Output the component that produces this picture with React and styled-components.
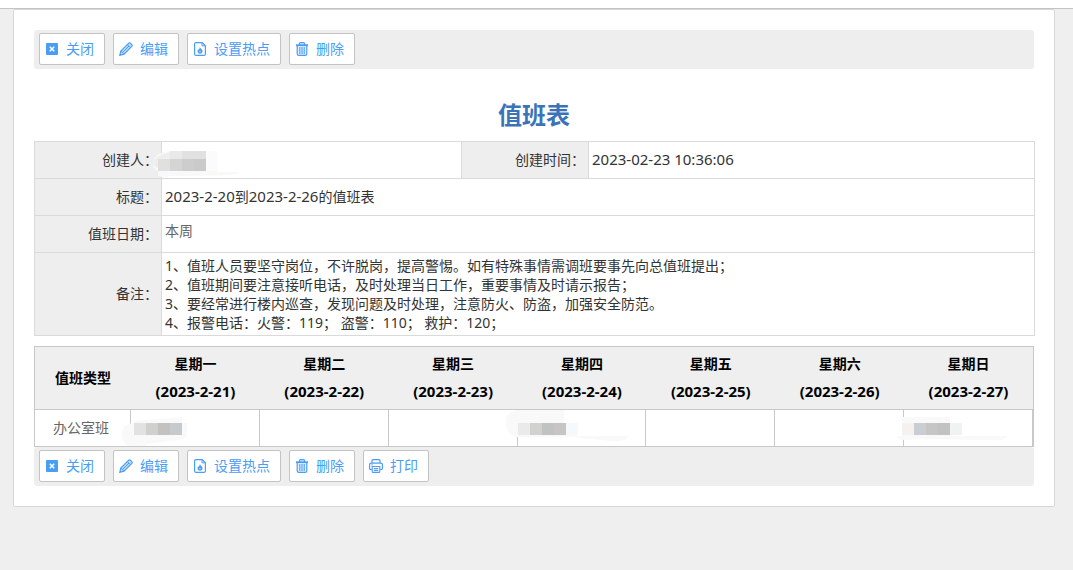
import React from "react";
import styled, { createGlobalStyle } from "styled-components";

const GlobalStyle = createGlobalStyle`
  * { box-sizing: border-box; }
  body {
    margin: 0;
    background: #efefef;
    color: #333;
    font-family: "Noto Sans", "Noto Sans CJK SC", sans-serif;
    font-size: 14px;
    line-height: 19px;
  }
`;

const TopStrip = styled.header`
  height: 9px;
  background: #fff;
  border-bottom: 1px solid #c3c3c3;
`;

const Card = styled.main`
  margin: 0 18px 0 13px;
  padding: 20px;
  background: #fff;
  border: 1px solid #d7d7d7;
  border-radius: 2px;
`;

const Toolbar = styled.div`
  display: flex;
  gap: 8px;
  padding: 3px 5px 4px;
  background: #eee;
  border-radius: 3px;
`;

const ToolButton = styled.button`
  display: flex;
  align-items: center;
  gap: 7px;
  height: 32px;
  padding: 0 10px 0 5px;
  background: #fff;
  border: 1px solid #c3c3c3;
  border-radius: 2px;
  color: #4a9df5;
  font-family: "Noto Sans CJK SC", sans-serif;
  font-size: 14px;
  line-height: 20px;
  white-space: nowrap;
  cursor: pointer;
`;

const ButtonLabel = styled.span`
  padding-bottom: 2px;
`;

const Icon = styled.svg`
  width: 14px;
  height: 14px;
  flex: none;
  fill: none;
  stroke: currentColor;
`;

const Title = styled.h1`
  margin: 28px 0 8px;
  color: #3b73b9;
  font-size: 24px;
  line-height: 36px;
  font-weight: 700;
  text-align: center;
`;

const InfoTable = styled.table`
  width: calc(100% + 1px);
  table-layout: fixed;
  border-collapse: collapse;
`;

const InfoLabel = styled.th`
  height: 37px;
  padding: 0 3px 2px 0;
  background: #eee;
  border: 1px solid #dadada;
  font-weight: 400;
  text-align: right;
`;

const InfoValue = styled.td`
  position: relative;
  padding: ${(p) => (p.$top ? "5px 3px" : "0 3px 2px")};
  border: 1px solid #dadada;
  color: ${(p) => (p.$muted ? "#666" : "#333")};
  vertical-align: ${(p) => (p.$top ? "top" : "middle")};
`;

const DateText = styled.span`
  font-size: 15px;
`;

const NoteList = styled.div`
  padding: 3px 0 1px;
  white-space: pre-line;
`;

const ScheduleTable = styled.table`
  width: 100%;
  margin-top: 10px;
  table-layout: fixed;
  border-collapse: separate;
  border-spacing: 0;
  border: 1px solid #c8c8c8;
`;

const DayHead = styled.th`
  height: 62px;
  padding: ${(p) => (p.$days ? "0 0 2px" : "0")};
  background: #efefef;
  color: #000;
  line-height: 28px;
  font-weight: 700;
`;

const DayLine = styled.div`
  font-size: ${(p) => (p.$date ? "15px" : "14px")};
  line-height: ${(p) => (p.$date ? "26px" : "28px")};
`;

const DutyCell = styled.td`
  position: relative;
  height: 37px;
  padding: 0 3px 2px 0;
  border-top: 1px solid #c8c8c8;
  border-right: 1px solid #c8c8c8;
  color: #666;
  text-align: center;
`;

const Redaction = styled.svg`
  position: absolute;
  left: ${(p) => p.$left}px;
  top: ${(p) => p.$top}px;
  z-index: 1;
`;

const CloseIcon = () => (
  <Icon viewBox="0 0 14 14" aria-hidden="true">
    <rect x="1" y="1" width="12" height="12" rx="1" fill="currentColor" stroke="none" />
    <path d="M4.8 4.8l4.4 4.4M9.2 4.8l-4.4 4.4" stroke="#fff" strokeWidth="1.5" />
  </Icon>
);

const PencilIcon = () => (
  <Icon viewBox="0 0 14 14" aria-hidden="true">
    <path d="M.8 13.3l1-4.2L9.6 1.3Q10.4.5 11.4 1.2l1.4 1.4Q13.6 3.5 12.8 4.4L5 12.2z" fill="#4a9df5" fillOpacity=".35" strokeWidth="1.2" />
    <path d="M8.3 2.6l3.2 3.2M2 9l3 3M3.5 10.5l6.5-6.5" strokeWidth="1" />
  </Icon>
);

const HotIcon = () => (
  <Icon viewBox="0 0 14 14" aria-hidden="true">
    <path d="M3 .6h6.2l3.2 3.2v8.1q0 1.5-1.5 1.5H3.1q-1.5 0-1.5-1.5V2Q1.6.6 3 .6z" strokeWidth="1.2" />
    <path d="M9 .8v3h3.2" strokeWidth="1" />
    <path d="M6.7 4.9C7.9 5.8 7.5 6.7 8.6 7.2c1.5 1.2 1.3 4.5-1.6 4.5-3 0-3-3-1.5-4.1C6.5 6.8 6.9 6 6.7 4.9z" fill="currentColor" stroke="none" />
    <path d="M7 8.5q-1.3 1.5 0 2 1.2-.4 0-2z" fill="#fff" stroke="none" />
  </Icon>
);

const TrashIcon = () => (
  <Icon viewBox="0 0 14 14" aria-hidden="true">
    <path d="M1 3.2h12" strokeWidth="1.8" />
    <path d="M4.5 3V1.6q0-.9.9-.9h3.2q.9 0 .9.9V3M2.2 3.5v8.2q0 1.7 1.7 1.7h6.2q1.7 0 1.7-1.7V3.5" fill="#4a9df5" fillOpacity=".15" strokeWidth="1.2" />
    <path d="M4.8 5v7M7 5v7M9.2 5v7" strokeWidth="1.1" />
  </Icon>
);

const PrintIcon = () => (
  <Icon viewBox="0 0 14 14" aria-hidden="true">
    <path d="M3 3.9V1.5q0-.9.9-.9h6.2q.9 0 .9.9v2.4M3 10.5H1.7Q.6 10.5.6 9.4V5.7q0-1.6 1.6-1.6h9.6q1.6 0 1.6 1.6v3.7q0 1.1-1.1 1.1H11" strokeWidth="1.2" />
    <path d="M3.2 7.5h7.6v4.9q0 1-1 1H4.2q-1 0-1-1zM4.8 9.5h4.4M4.8 11.4h4.4M2.3 6h1.5" strokeWidth="1.1" />
  </Icon>
);

const ACTIONS = [
  { label: "关闭", Glyph: CloseIcon },
  { label: "编辑", Glyph: PencilIcon },
  { label: "设置热点", Glyph: HotIcon },
  { label: "删除", Glyph: TrashIcon },
  { label: "打印", Glyph: PrintIcon },
];

const ActionBar = ({ actions }) => (
  <Toolbar role="toolbar">
    {actions.map(({ label, Glyph }) => (
      <ToolButton key={label} type="button">
        <Glyph />
        <ButtonLabel>{label}</ButtonLabel>
      </ToolButton>
    ))}
  </Toolbar>
);

const CreatorMask = () => (
  <Redaction $left={-9} $top={8} width="88" height="28" aria-hidden="true">
    <path d="M0 12Q2 3 16 1h49v21q18-1 22 1-6 3-70 3-3 2-12 0v-5Q0 20 0 12z" fill="#f9f9f9" />
    <path d="M0 12Q3 5 17 2v16H5Q0 17 0 12z" fill="#eee" />
    <rect x="17" y="1" width="12" height="8" fill="#e9e9e9" />
    <rect x="29" y="1" width="24" height="8" fill="#e1e1e1" />
    <rect x="5" y="9" width="12" height="12" fill="#e2e0df" />
    <rect x="17" y="9" width="12" height="12" fill="#d5d4d5" />
    <rect x="29" y="9" width="12" height="12" fill="#cecdce" />
    <rect x="41" y="9" width="12" height="12" fill="#cacaca" />
    <rect x="53" y="1" width="12" height="20" fill="#fbfbfd" />
  </Redaction>
);

const MASKS = {
  0: {
    left: -9,
    blob: "M0 24Q0 14 12 13V11l48-4v6h5v12q-1 5-16 6l-25 3v2H8Q0 34 0 24z",
    blocks: [[12, "#e2e2e1"], [24, "#d0d0ce"], [36, "#c3c2c0"], [48, "#c6cacd"]],
  },
  3: {
    left: -13,
    blob: "M1 8Q3 1 14 0h45v14h13v12h52q-2 6-18 5l-40-4H12Q0 25 1 8z",
    blocks: [[13, "#eaeae9"], [25, "#d2d1cf"], [37, "#c0c2c4"], [49, "#c6c4c5"], [61, "#f6f9fb"]],
  },
  6: {
    left: -10,
    blob: "M8 7h48v19h58q-4 5-14 4l-82-1v1H10Q4 30 2 26h6z",
    blocks: [[8, "#f5f1ee"], [20, "#cacdd4"], [32, "#c7c6c4"], [44, "#c2c2c2"], [56, "#eff3f4"]],
  },
};

const DutyMask = ({ left, blob, blocks }) => (
  <Redaction $left={left} $top={0} width="126" height="36" aria-hidden="true">
    <path d={blob} fill="#f9f9f9" />
    {blocks.map(([x, color]) => (
      <rect key={x} x={x} y="13" width="12" height="12" fill={color} />
    ))}
  </Redaction>
);

const NOTES = `1、值班人员要坚守岗位，不许脱岗，提高警惕。如有特殊事情需调班要事先向总值班提出；
2、值班期间要注意接听电话，及时处理当日工作，重要事情及时请示报告；
3、要经常进行楼内巡查，发现问题及时处理，注意防火、防盗，加强安全防范。
4、报警电话：火警：119； 盗警：110； 救护：120；`;

const DAYS = [
  ["星期一", "(2023-2-21)"],
  ["星期二", "(2023-2-22)"],
  ["星期三", "(2023-2-23)"],
  ["星期四", "(2023-2-24)"],
  ["星期五", "(2023-2-25)"],
  ["星期六", "(2023-2-26)"],
  ["星期日", "(2023-2-27)"],
];

export default function App() {
  return (
    <>
      <GlobalStyle />
      <TopStrip />
      <Card>
        <ActionBar actions={ACTIONS.slice(0, 4)} />
        <Title>值班表</Title>
        <InfoTable>
          <colgroup>
            <col style={{ width: "127px" }} />
            <col style={{ width: "300px" }} />
            <col style={{ width: "127px" }} />
            <col />
          </colgroup>
          <tbody>
            <tr>
              <InfoLabel scope="row">创建人：</InfoLabel>
              <InfoValue><CreatorMask /></InfoValue>
              <InfoLabel scope="row">创建时间：</InfoLabel>
              <InfoValue><DateText>2023-02-23 10:36:06</DateText></InfoValue>
            </tr>
            <tr>
              <InfoLabel scope="row">标题：</InfoLabel>
              <InfoValue colSpan={3}>
                <DateText>2023-2-20</DateText>到<DateText>2023-2-26</DateText>的值班表
              </InfoValue>
            </tr>
            <tr>
              <InfoLabel scope="row">值班日期：</InfoLabel>
              <InfoValue colSpan={3} $top $muted>本周</InfoValue>
            </tr>
            <tr>
              <InfoLabel scope="row">备注：</InfoLabel>
              <InfoValue colSpan={3}><NoteList>{NOTES}</NoteList></InfoValue>
            </tr>
          </tbody>
        </InfoTable>
        <ScheduleTable>
          <colgroup>
            <col style={{ width: "96px" }} />
            {DAYS.map(([day]) => <col key={day} />)}
          </colgroup>
          <thead>
            <tr>
              <DayHead scope="col">值班类型</DayHead>
              {DAYS.map(([day, date]) => (
                <DayHead scope="col" key={day} $days>
                  <DayLine>{day}</DayLine>
                  <DayLine $date>{date}</DayLine>
                </DayHead>
              ))}
            </tr>
          </thead>
          <tbody>
            <tr>
              <DutyCell>办公室班</DutyCell>
              {DAYS.map(([day], i) => (
                <DutyCell key={day}>{MASKS[i] && <DutyMask {...MASKS[i]} />}</DutyCell>
              ))}
            </tr>
          </tbody>
        </ScheduleTable>
        <ActionBar actions={ACTIONS} />
      </Card>
    </>
  );
}
